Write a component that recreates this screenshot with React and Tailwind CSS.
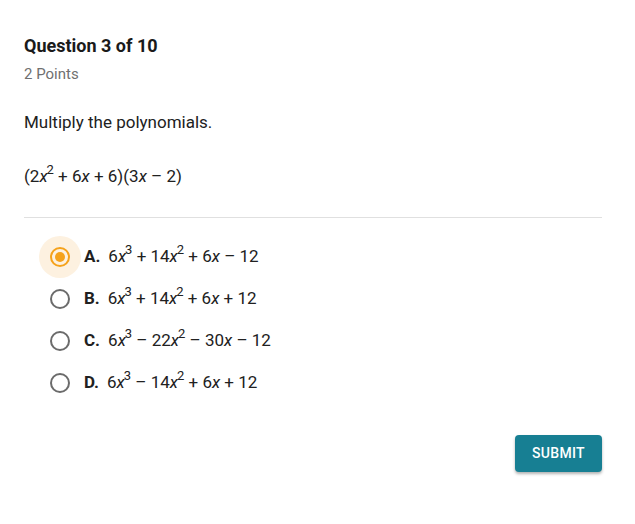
import React from "react";

const X = () => <i className="italic">x</i>;
const Sup = ({ children }) => (
  <sup className="relative -top-[8px] align-baseline text-[13px] leading-none -ml-[1px]">{children}</sup>
);

const options = [
  { l: "A.", c: <>6<X /><Sup>3</Sup> + 14<X /><Sup>2</Sup> + 6<X /> – 12</>, sel: true },
  { l: "B.", c: <>6<X /><Sup>3</Sup> + 14<X /><Sup>2</Sup> + 6<X /> + 12</> },
  { l: "C.", c: <>6<X /><Sup>3</Sup> – 22<X /><Sup>2</Sup> – 30<X /> – 12</> },
  { l: "D.", c: <>6<X /><Sup>3</Sup> – 14<X /><Sup>2</Sup> + 6<X /> + 12</> },
];

export default function App() {
  return (
    <div className="w-[635px] h-[524px] bg-white px-[24px] pt-[34px] text-[#212121]" style={{ fontFamily: "Roboto, 'Liberation Sans', sans-serif" }}>
      <div className="w-[578px] flex flex-col">
        <div className="text-[18px] font-bold leading-[24px] text-[#1a1a1a]">Question 3 of 10</div>
        <div className="mt-[6px] text-[15px] leading-[20px] text-[#707070]">2 Points</div>
        <div className="mt-[26px] text-[17px] leading-[24px]">Multiply the polynomials.</div>
        <div className="mt-[30px] text-[17px] leading-[24px]">
          (2<X /><Sup>2</Sup> + 6<X /> + 6)(3<X /> – 2)
        </div>
        <div className="mt-[29px] h-px bg-[#e0e0e0]" />
        <div className="mt-[18px] flex flex-col">
          {options.map((o) => (
            <div key={o.l} className="h-[42px] flex items-center">
              <div className="ml-[15px] w-[42px] h-[42px] flex items-center justify-center">
                <div
                  className={
                    "w-[42px] h-[42px] rounded-full flex items-center justify-center " +
                    (o.sel ? "bg-[#fdf1e0]" : "")
                  }
                >
                  <div
                    className={
                      "w-[20px] h-[20px] rounded-full border-2 flex items-center justify-center " +
                      (o.sel ? "border-[#f5a21b]" : "border-[#6b6b6b]")
                    }
                  >
                    {o.sel && <div className="w-[10px] h-[10px] rounded-full bg-[#f5a21b]" />}
                  </div>
                </div>
              </div>
              <span className="ml-[3px] text-[17px] font-bold">{o.l}</span>
              <span className="ml-[8px] text-[17px]">{o.c}</span>
            </div>
          ))}
        </div>
        <div className="mt-[31px] flex justify-end">
          <button className="w-[87px] h-[37px] rounded-[4px] bg-[#177f93] text-white text-[14px] font-medium tracking-[0.3px] shadow-[0_2px_3px_rgba(0,0,0,0.3)]">
            SUBMIT
          </button>
        </div>
      </div>
    </div>
  );
}
